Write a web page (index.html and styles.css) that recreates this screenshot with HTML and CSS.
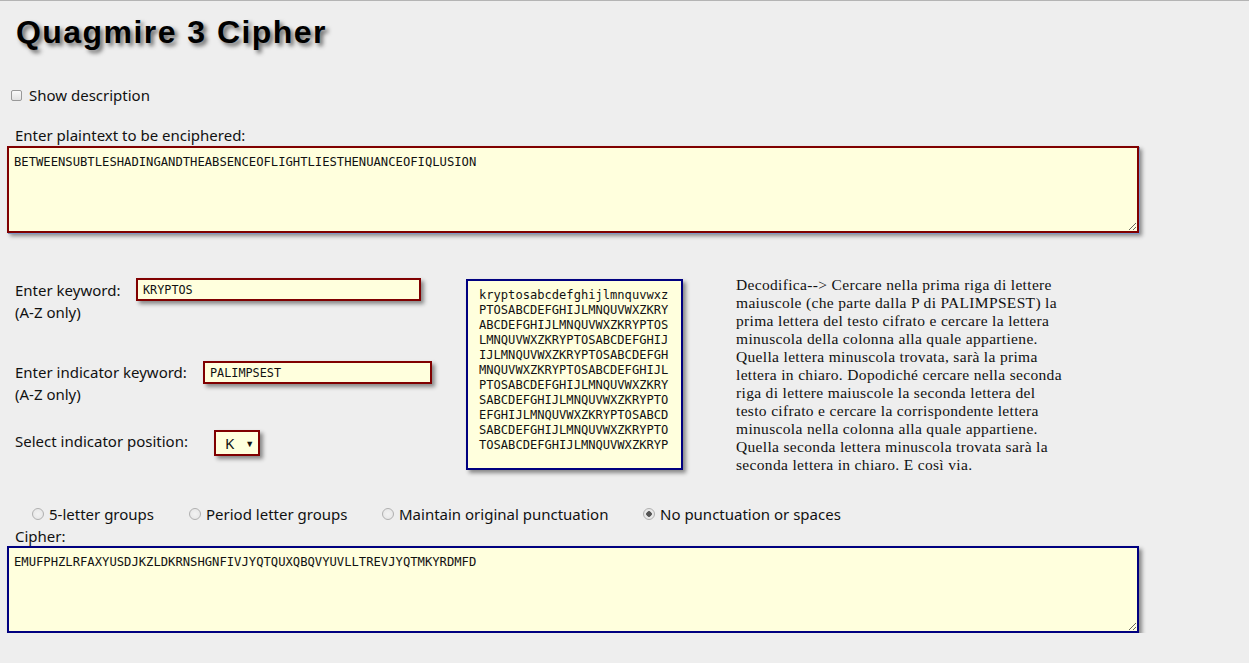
FILE: index.html
```html
<!DOCTYPE html>
<html lang="it">
<head>
<meta charset="utf-8">
<title>Quagmire 3 Cipher</title>
<link rel="stylesheet" href="styles.css">
</head>
<body>
<div class="page">
  <h1 class="title">Quagmire 3 Cipher</h1>

  <label class="check-row"><input type="checkbox" class="check"> Show description</label>

  <div class="field-label plain-label">Enter plaintext to be enciphered:</div>
  <textarea class="area area-plain" spellcheck="false">BETWEENSUBTLESHADINGANDTHEABSENCEOFLIGHTLIESTHENUANCEOFIQLUSION</textarea>

  <div class="middle">
    <div class="controls">
      <div class="ctrl-row row-key">
        <div class="ctrl-label lbl-key">Enter keyword:<br>(A-Z only)</div>
        <input class="text-in in-key" type="text" value="KRYPTOS">
      </div>
      <div class="ctrl-row row-ind">
        <div class="ctrl-label lbl-ind">Enter indicator keyword:<br>(A-Z only)</div>
        <input class="text-in in-ind" type="text" value="PALIMPSEST">
      </div>
      <div class="ctrl-row row-pos">
        <div class="ctrl-label lbl-pos">Select indicator position:</div>
        <div class="select"><span>K</span><span class="arrow">&#9660;</span></div>
      </div>
    </div>

    <pre class="tableau">kryptosabcdefghijlmnquvwxz
PTOSABCDEFGHIJLMNQUVWXZKRY
ABCDEFGHIJLMNQUVWXZKRYPTOS
LMNQUVWXZKRYPTOSABCDEFGHIJ
IJLMNQUVWXZKRYPTOSABCDEFGH
MNQUVWXZKRYPTOSABCDEFGHIJL
PTOSABCDEFGHIJLMNQUVWXZKRY
SABCDEFGHIJLMNQUVWXZKRYPTO
EFGHIJLMNQUVWXZKRYPTOSABCD
SABCDEFGHIJLMNQUVWXZKRYPTO
TOSABCDEFGHIJLMNQUVWXZKRYP</pre>

    <p class="desc">Decodifica--&gt; Cercare nella prima riga di lettere maiuscole (che parte dalla P di PALIMPSEST) la prima lettera del testo cifrato e cercare la lettera minuscola della colonna alla quale appartiene. Quella lettera minuscola trovata, sarà la prima lettera in chiaro. Dopodiché cercare nella seconda riga di lettere maiuscole la seconda lettera del testo cifrato e cercare la corrispondente lettera minuscola nella colonna alla quale appartiene. Quella seconda lettera minuscola trovata sarà la seconda lettera in chiaro. E così via.</p>
  </div>

  <div class="radios">
    <label class="radio-item r1"><input type="radio" name="fmt" class="radio"> 5-letter groups</label>
    <label class="radio-item r2"><input type="radio" name="fmt" class="radio"> Period letter groups</label>
    <label class="radio-item r3"><input type="radio" name="fmt" class="radio"> Maintain original punctuation</label>
    <label class="radio-item r4"><input type="radio" name="fmt" class="radio" checked> No punctuation or spaces</label>
  </div>

  <div class="field-label cipher-label">Cipher:</div>
  <textarea class="area area-cipher" spellcheck="false">EMUFPHZLRFAXYUSDJKZLDKRNSHGNFIVJYQTQUXQBQVYUVLLTREVJYQTMKYRDMFD</textarea>
</div>
</body>
</html>
```

FILE: styles.css
```css
html, body {
  margin: 0;
  padding: 0;
  background: #eeeeee;
}
body {
  border-top: 1px solid #b4b4b4;
  font-family: "Noto Sans", "Open Sans", sans-serif;
  font-size: 15px;
  color: #111;
}
.page {
  padding: 0 0 0 7px;
}
.title {
  margin: 0;
  padding: 10px 0 0 9px;
  font-family: "Liberation Sans", Arial, sans-serif;
  font-weight: bold;
  font-size: 32px;
  line-height: 42px;
  letter-spacing: 1.45px;
  color: #000;
  text-shadow: 3px 3px 4px #666;
}
.check-row {
  display: flex;
  align-items: center;
  margin-top: 31px;
  padding-left: 4px;
  height: 22px;
}
.check {
  appearance: none;
  -webkit-appearance: none;
  width: 11px;
  height: 11px;
  margin: 0 7px 0 0;
  border: 1px solid #999;
  border-radius: 2px;
  background: linear-gradient(#fafafa, #e2e2e2);
}
.field-label {
  padding-left: 8px;
  height: 22px;
  line-height: 22px;
}
.plain-label {
  margin-top: 18px;
}
.area {
  display: block;
  box-sizing: border-box;
  width: 1132px;
  height: 87px;
  margin: 0;
  padding: 6px 5px 4px;
  background: #ffffdd;
  font-family: "DejaVu Sans Mono", "Liberation Mono", monospace;
  font-size: 12.2px;
  line-height: 16px;
  color: #111;
  outline: none;
}
.area-plain {
  border: 2px solid #800000;
  box-shadow: 1px 1px 0 #7e97c6, 3px 3px 4px #888;
}
.area-cipher {
  border: 2px solid #000080;
  box-shadow: 3px 3px 4px #888;
  margin-top: -1px;
}
.middle {
  display: flex;
  align-items: flex-start;
  margin-top: 46px;
}
.controls {
  width: 459px;
}
.ctrl-row {
  display: flex;
  align-items: flex-start;
  padding-left: 8px;
}
.ctrl-label {
  line-height: 22px;
}
.lbl-key { width: 121px; }
.lbl-ind { width: 188px; }
.lbl-pos { width: 199px; }
.row-key { height: 83px; }
.row-ind { height: 69px; }
.text-in {
  box-sizing: border-box;
  height: 23px;
  margin: -1px 0 0 0;
  padding: 0 5px;
  border: 2px solid #800000;
  background: #ffffdd;
  font-family: "DejaVu Sans Mono", "Liberation Mono", monospace;
  font-size: 11.8px;
  color: #111;
  box-shadow: 3px 3px 4px #888;
  outline: none;
}
.in-key { width: 285px; }
.in-ind { width: 229px; }
.row-ind .ctrl-label { margin-top: -1px; }
.row-pos .ctrl-label { margin-top: -1px; }
.select {
  box-sizing: border-box;
  width: 46px;
  height: 26px;
  margin-top: -1px;
  padding: 0 0 0 9px;
  display: flex;
  align-items: center;
  gap: 11px;
  border: 2px solid #800000;
  background: #ffffdd;
  box-shadow: 3px 3px 4px #888;
  font-size: 15px;
}
.arrow {
  font-size: 9px;
}
.tableau {
  box-sizing: border-box;
  width: 217px;
  height: 191px;
  margin: 0;
  padding: 7px 0 0 11px;
  border: 2px solid #000080;
  background: #ffffdd;
  box-shadow: 3px 3px 4px #888;
  font-family: "DejaVu Sans Mono", "Liberation Mono", monospace;
  font-size: 12.1px;
  line-height: 15px;
  color: #111;
}
.desc {
  width: 334px;
  margin: -3px 0 0 53px;
  font-family: "Liberation Serif", "Times New Roman", serif;
  font-size: 15.5px;
  letter-spacing: 0.33px;
  line-height: 18px;
  color: #111;
}
.radios {
  display: flex;
  align-items: center;
  margin-top: 29px;
  padding-left: 25px;
  height: 22px;
}
.radio-item {
  display: flex;
  align-items: center;
}
.r1 { width: 157px; }
.r2 { width: 193px; }
.r3 { width: 261px; }
.radio {
  appearance: none;
  -webkit-appearance: none;
  width: 12px;
  height: 12px;
  margin: 0 5px 0 0;
  border: 1px solid #b0b0b0;
  border-radius: 50%;
  background: radial-gradient(circle, #f2f2f2 0, #e4e4e4 100%);
  box-sizing: border-box;
}
.radio:checked {
  background: radial-gradient(circle, #555 0, #555 2.5px, #e8e8e8 3px);
}
.cipher-label {
  margin-top: 0;
}
```
